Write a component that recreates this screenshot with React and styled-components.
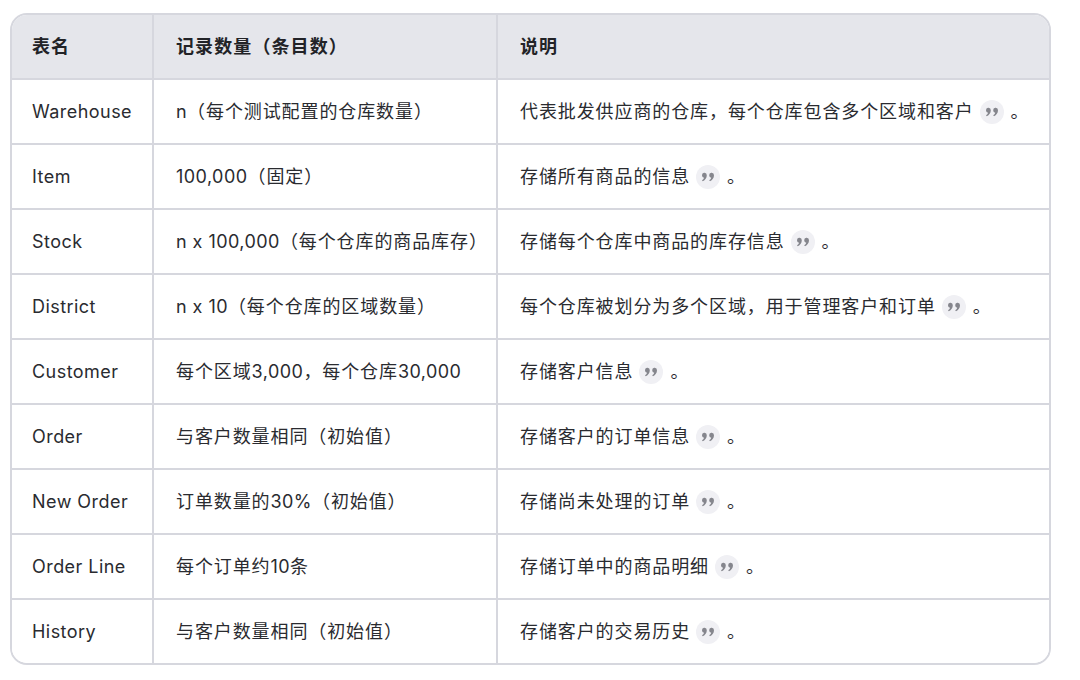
import styled, { createGlobalStyle } from "styled-components";

const GlobalStyle = createGlobalStyle`
  html, body {
    margin: 0;
    background: #ffffff;
  }
`;

const LINE = "#d6d7de";

const rows = [
  ["Warehouse", "n（每个测试配置的仓库数量）", "代表批发供应商的仓库，每个仓库包含多个区域和客户"],
  ["Item", "100,000（固定）", "存储所有商品的信息"],
  ["Stock", "n x 100,000（每个仓库的商品库存）", "存储每个仓库中商品的库存信息"],
  ["District", "n x 10（每个仓库的区域数量）", "每个仓库被划分为多个区域，用于管理客户和订单"],
  ["Customer", "每个区域3,000，每个仓库30,000", "存储客户信息"],
  ["Order", "与客户数量相同（初始值）", "存储客户的订单信息"],
  ["New Order", "订单数量的30%（初始值）", "存储尚未处理的订单"],
  ["Order Line", "每个订单约10条", "存储订单中的商品明细"],
  ["History", "与客户数量相同（初始值）", "存储客户的交易历史"],
];

const Page = styled.div`
  padding: 13px 29px 15px 10px;
  font-family: Inter, "Noto Sans CJK SC", sans-serif;
`;

const Table = styled.div`
  width: 1041px;
  box-sizing: border-box;
  border: 2px solid ${LINE};
  border-radius: 17px;
  overflow: hidden;
`;

const HeadRow = styled.div`
  display: grid;
  grid-template-columns: 140px 344px 1fr;
  height: 63px;
  background: #e5e6eb;
`;

const Row = styled.div`
  display: grid;
  grid-template-columns: 140px 344px 1fr;
  height: 65px;
  box-sizing: border-box;
  background: #ffffff;
  border-top: 2px solid ${LINE};
`;

const Cell = styled.div`
  display: flex;
  align-items: center;
  padding: 0 0 4px 22px;
  border-left: 2px solid ${LINE};
  font-size: 18px;
  font-weight: 400;
  color: #2a2b30;
  letter-spacing: 0.45px;
  white-space: pre;
`;

const NameCell = styled(Cell)`
  padding: 0 0 0 20px;
  border-left: none;
`;

const HeadCell = styled(Cell)`
  padding-bottom: 3px;
  padding-left: ${(props) => (props.$first ? "20px" : "22px")};
  border-left: ${(props) => (props.$first ? "none" : `2px solid ${LINE}`)};
  font-weight: 600;
  color: #222327;
`;

const Han = styled.span`
  letter-spacing: ${(props) => (props.$head ? "1.1px" : "0.9px")};
`;

const Badge = styled.span`
  display: inline-flex;
  align-items: center;
  justify-content: center;
  width: 24px;
  height: 24px;
  margin: 5px 0 0 6px;
  border-radius: 50%;
  background: #f0f0f4;
`;

const Stop = styled.span`
  margin-left: 7px;
`;

// wider tracking on the Chinese runs than on the latin ones
const Text = ({ children, head }) => (
  <span>
    {children.split(/([\u3000-\u9fff\uff00-\uffef]+)/).map((part, i) =>
      i % 2 ? <Han key={i} $head={head}>{part}</Han> : part
    )}
  </span>
);

const QuoteIcon = () => (
  <svg width="14" height="10" viewBox="0 0 14 10" fill="#85868d">
    <path d="M3 .8a2.5 2.5 0 0 1 2.8 2.5c0 2.7-1.6 4.9-4 6l-.8-1c1-.7 1.8-1.6 2-2.6A2.5 2.5 0 0 1 3 .8z" />
    <path d="M10.2.8A2.5 2.5 0 0 1 13 3.3c0 2.7-1.6 4.9-4 6l-.8-1c1-.7 1.8-1.6 2-2.6a2.5 2.5 0 0 1 0-4.9z" />
  </svg>
);

export default function App() {
  return (
    <>
      <GlobalStyle />
      <Page>
        <Table>
          <HeadRow>
            <HeadCell $first><Text head>表名</Text></HeadCell>
            <HeadCell><Text head>记录数量（条目数）</Text></HeadCell>
            <HeadCell><Text head>说明</Text></HeadCell>
          </HeadRow>
          {rows.map(([name, count, desc]) => (
            <Row key={name}>
              <NameCell>{name}</NameCell>
              <Cell><Text>{count}</Text></Cell>
              <Cell>
                <Text>{desc}</Text>
                <Badge><QuoteIcon /></Badge>
                <Stop>。</Stop>
              </Cell>
            </Row>
          ))}
        </Table>
      </Page>
    </>
  );
}
